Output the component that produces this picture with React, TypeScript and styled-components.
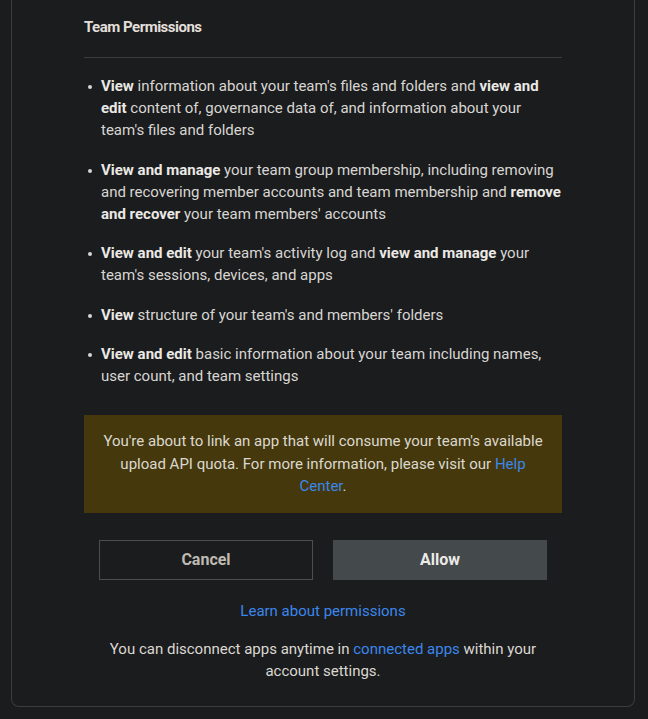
import React from 'react'
import styled, { createGlobalStyle } from 'styled-components'

const GlobalStyle = createGlobalStyle`
  html, body {
    margin: 0;
    padding: 0;
    background: #1b1c1e;
  }
  body {
    font-family: Roboto, "Noto Sans", sans-serif;
    -webkit-font-smoothing: antialiased;
  }
`

const Page = styled.div`
  width: 648px;
  min-height: 719px;
  background: #1b1c1e;
`

const Card = styled.div`
  margin-left: 11px;
  width: 624px;
  box-sizing: border-box;
  border: 1px solid #3c3d3f;
  border-top: none;
  border-radius: 0 0 8px 8px;
  padding: 16px 72px 24px;
  color: #d8d6d2;
`

const Title = styled.h3`
  margin: 0;
  font-size: 15px;
  line-height: 22px;
  font-weight: 700;
  letter-spacing: -0.5px;
  color: #e2dfda;
`

const Divider = styled.hr`
  margin: 19px 0 17px;
  border: none;
  border-top: 1px solid #3a3b3d;
`

const List = styled.ul`
  margin: 0;
  padding: 0;
  list-style: none;
`

const Item = styled.li`
  position: relative;
  padding-left: 17px;
  font-size: 15px;
  line-height: 22px;
  margin-bottom: 17.5px;

  &:last-child {
    margin-bottom: 0;
  }

  &::before {
    content: '';
    position: absolute;
    left: 4px;
    top: 10px;
    width: 4px;
    height: 4px;
    border-radius: 50%;
    background: #d8d6d2;
  }

  b {
    font-weight: 700;
    color: #ebe9e5;
  }
`

const Notice = styled.div`
  margin-top: 28px;
  background: #45380d;
  padding: 15px 18px;
  font-size: 15px;
  line-height: 22.5px;
  text-align: center;
  color: #dcd8cf;
`

const Link = styled.a`
  color: #3b87ec;
  text-decoration: none;
`

const Buttons = styled.div`
  display: grid;
  grid-template-columns: 1fr 1fr;
  gap: 20px;
  margin: 27px 15px 0;
`

const Button = styled.button<{ $primary?: boolean }>`
  height: 40px;
  box-sizing: border-box;
  font-family: Roboto, "Noto Sans", sans-serif;
  font-size: 16px;
  font-weight: 700;
  cursor: pointer;
  border: 1px solid ${p => (p.$primary ? '#44494b' : '#4c4d4f')};
  background: ${p => (p.$primary ? '#44494b' : 'transparent')};
  color: ${p => (p.$primary ? '#ecebe8' : '#bfbab2')};
`

const Centered = styled.p<{ $top: number }>`
  margin: ${p => p.$top}px 0 0;
  font-size: 15px;
  line-height: 22px;
  text-align: center;
  color: #dcd8d1;
`

export default function App() {
  return (
    <Page>
      <GlobalStyle />
      <Card>
        <Title>Team Permissions</Title>
        <Divider />
        <List>
          <Item>
            <b>View</b> information about your team's files and folders and <b>view and edit</b> content of,
            governance data of, and information about your team's files and folders
          </Item>
          <Item>
            <b>View and manage</b> your team group membership, including removing and recovering member accounts
            and team membership and <b>remove and recover</b> your team members' accounts
          </Item>
          <Item>
            <b>View and edit</b> your team's activity log and <b>view and manage</b> your team's sessions, devices,
            and apps
          </Item>
          <Item>
            <b>View</b> structure of your team's and members' folders
          </Item>
          <Item>
            <b>View and edit</b> basic information about your team including names, user count, and team settings
          </Item>
        </List>
        <Notice>
          You're about to link an app that will consume your team's available upload API quota. For more
          information, please visit our <Link href="#">Help Center</Link>.
        </Notice>
        <Buttons>
          <Button>Cancel</Button>
          <Button $primary>Allow</Button>
        </Buttons>
        <Centered $top={20}>
          <Link href="#">Learn about permissions</Link>
        </Centered>
        <Centered $top={16}>
          You can disconnect apps anytime in <Link href="#">connected apps</Link> within your account settings.
        </Centered>
      </Card>
    </Page>
  )
}
